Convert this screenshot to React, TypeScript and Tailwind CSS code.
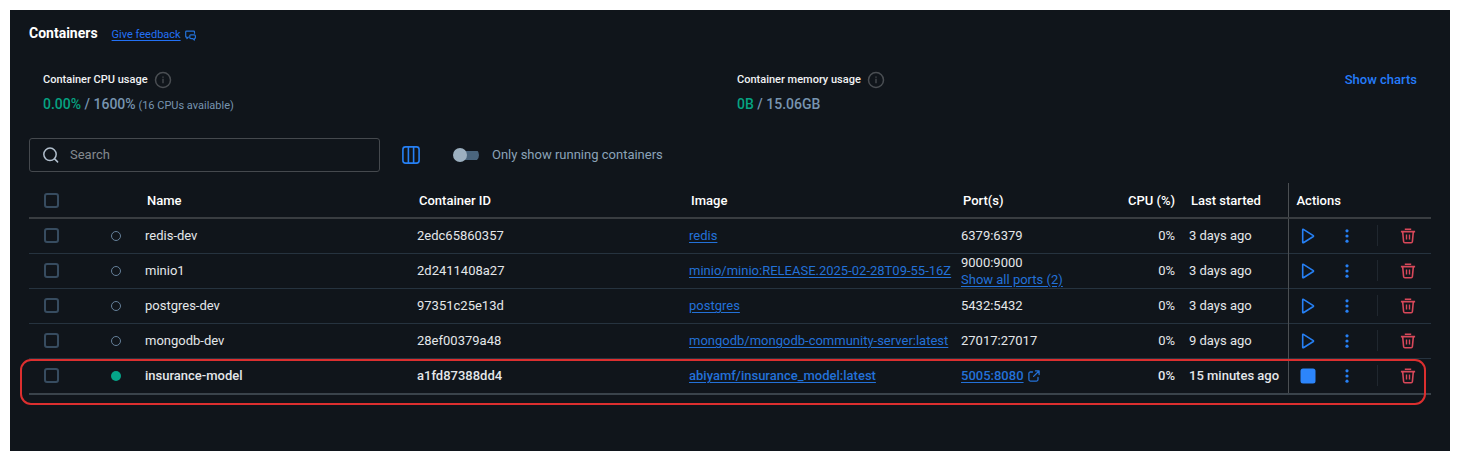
import React from "react";

type Container = {
  name: string;
  id: string;
  image: string;
  port: string;
  morePorts?: string;
  started: string;
  running?: boolean;
};

const containers: Container[] = [
  { name: "redis-dev", id: "2edc65860357", image: "redis", port: "6379:6379", started: "3 days ago" },
  {
    name: "minio1",
    id: "2d2411408a27",
    image: "minio/minio:RELEASE.2025-02-28T09-55-16Z",
    port: "9000:9000",
    morePorts: "Show all ports (2)",
    started: "3 days ago",
  },
  { name: "postgres-dev", id: "97351c25e13d", image: "postgres", port: "5432:5432", started: "3 days ago" },
  {
    name: "mongodb-dev",
    id: "28ef00379a48",
    image: "mongodb/mongodb-community-server:latest",
    port: "27017:27017",
    started: "9 days ago",
  },
  {
    name: "insurance-model",
    id: "a1fd87388dd4",
    image: "abiyamf/insurance_model:latest",
    port: "5005:8080",
    started: "15 minutes ago",
    running: true,
  },
];

function InfoIcon() {
  return (
    <svg width="18" height="18" viewBox="0 0 18 18" fill="none" stroke="#4a4e53" aria-hidden="true">
      <circle cx="9" cy="9" r="7.5" strokeWidth="1.5" />
      <path d="M9 7.8v4.400M9 5.400v1.300" strokeWidth="1.300" />
    </svg>
  );
}

function FeedbackIcon() {
  return (
    <svg width="11" height="11" viewBox="0 0 11 11" fill="none" stroke="#2371d8" strokeWidth="1.2" strokeLinejoin="round" aria-hidden="true">
      <path d="M3.800 7.200H3.400L1.900 8.600V7.200H1.500a.8.8 0 0 1-.8-.8V1.900a.8.8 0 0 1 .8-.8h7.200a.8.8 0 0 1 .8.8v1.900" />
      <path d="M5.700 4.800h3.600a1.100 1.100 0 0 1 1.100 1.100v1.600a1.100 1.100 0 0 1-1 1.100v1.500L7.900 8.700H5.900a1.100 1.100 0 0 1-1.100-1.100V5.700a.9.9 0 0 1 .9-.9z" />
    </svg>
  );
}

function SearchIcon() {
  return (
    <svg width="16" height="16" viewBox="0 0 16 16" fill="none" stroke="#b1bfcd" strokeWidth="1.500" strokeLinecap="round" aria-hidden="true">
      <circle cx="7" cy="7.300" r="6.200" />
      <path d="M11.600 11.900l3 3" />
    </svg>
  );
}

function ColumnsIcon() {
  return (
    <svg width="18" height="18" viewBox="0 0 18 18" fill="none" stroke="#2680f5" strokeWidth="1.600" aria-hidden="true">
      <rect x="0.900" y="0.900" width="16.200" height="16.200" rx="2.600" />
      <path d="M6.400 1v16M11.600 1v16" />
    </svg>
  );
}

function PlayIcon() {
  return (
    <svg width="16" height="16" viewBox="0 0 16 16" fill="none" stroke="#2680f5" strokeWidth="1.600" strokeLinejoin="round" aria-hidden="true">
      <path d="M2.700 1.700v12.600c0 .4.400.6.700.4l9.900-6.200c.3-.2.300-.7 0-.9L3.400 1.300c-.3-.2-.7 0-.7.4z" />
    </svg>
  );
}

function StopIcon() {
  return (
    <svg width="16" height="16" viewBox="0 0 16 16" fill="#2c85fb" aria-hidden="true">
      <rect x="0.500" y="0.500" width="15" height="15" rx="2.500" />
    </svg>
  );
}

function DotsIcon() {
  return (
    <svg width="16" height="16" viewBox="0 0 16 16" fill="#2680f5" aria-hidden="true">
      <circle cx="8" cy="2.800" r="1.600" />
      <circle cx="8" cy="8" r="1.600" />
      <circle cx="8" cy="13.200" r="1.600" />
    </svg>
  );
}

function TrashIcon() {
  return (
    <svg width="16" height="16" viewBox="0 0 16 16" fill="none" stroke="#d9485a" strokeWidth="1.600" strokeLinejoin="round" aria-hidden="true">
      <path d="M.9 3.600h14.200M4.800 1.300h6.400M2.700 4l.9 9.500c.1.800.6 1.300 1.300 1.300h6.200c.7 0 1.200-.5 1.300-1.300L13.300 4" />
      <path d="M6.500 6.600v5M9.500 6.600v5" strokeWidth="1.400" />
    </svg>
  );
}

function ExternalIcon() {
  return (
    <svg width="12" height="12" viewBox="0 0 12 12" fill="none" stroke="#2371d8" strokeWidth="1.300" strokeLinecap="round" strokeLinejoin="round" aria-hidden="true">
      <path d="M4.500 2H2.400C1.500 2 .9 2.600.9 3.500v6.100c0 .9.600 1.500 1.500 1.500h6.100c.9 0 1.500-.6 1.500-1.500V7.500" />
      <path d="M7.500.9h3.600v3.600M11 1L5.600 6.400" />
    </svg>
  );
}

function RowCheckbox({ label }: { label: string }) {
  return (
    <input
      type="checkbox"
      aria-label={label}
      className="block size-[15px] appearance-none rounded-[3px] border-2 border-[#374c60] checked:bg-[#2680f5]"
    />
  );
}

function Usage({ title, used, total, note }: { title: string; used: string; total: string; note?: string }) {
  return (
    <section>
      <h2 className="flex items-center gap-1.5 text-[11px] leading-5 font-medium text-[#f0f2f4]">
        {title}
        <InfoIcon />
      </h2>
      <p className="mt-1 text-[14px] leading-5 font-medium text-[#7794b0]">
        <span className="text-[#05a382]">{used}</span> / {total}
        {note && <span className="text-[11px] font-normal"> {note}</span>}
      </p>
    </section>
  );
}

const link = "text-[#2371d8] underline underline-offset-2";

function Row({ c }: { c: Container }) {
  const line = c.running ? "h-9 border-b-2 border-[#3a434b] font-medium" : "h-[35px] border-b border-[#26333f]";
  return (
    <tr className={line}>
      <td className="pl-[15px]">
        <RowCheckbox label={`Select ${c.name}`} />
      </td>
      <td className="pl-[22px]">
        <span
          className={
            c.running
              ? "block size-[10px] rounded-full bg-[#05a68a]"
              : "block size-[10px] rounded-full border border-[#65809a]"
          }
        />
      </td>
      <td className="px-2">{c.name}</td>
      <td className="px-2">{c.id}</td>
      <td className="px-2 whitespace-nowrap">
        <a href="#image" className={link}>{c.image}</a>
      </td>
      <td className="px-2">
        {c.running ? (
          <a href="#port" className="flex items-center gap-1">
            <span className={link}>{c.port}</span>
            <ExternalIcon />
          </a>
        ) : (
          c.port
        )}
        {c.morePorts && (
          <>
            <br />
            <a href="#ports" className={link}>{c.morePorts}</a>
          </>
        )}
      </td>
      <td className="px-2 text-right">0%</td>
      <td className="pl-1.5 whitespace-nowrap">{c.started}</td>
      <td className="border-l border-[#4b4f53]">
        <div className="flex items-center pr-[15px] pl-[11px]">
          <button type="button" aria-label={c.running ? "Stop" : "Start"}>
            {c.running ? <StopIcon /> : <PlayIcon />}
          </button>
          <button type="button" aria-label="More actions" className="ml-[23px]">
            <DotsIcon />
          </button>
          <span className="ml-auto h-[21px] w-px bg-[#20272f]" />
          <button type="button" aria-label="Delete" className="ml-[22px]">
            <TrashIcon />
          </button>
        </div>
      </td>
    </tr>
  );
}

export default function App() {
  return (
    <div className="flex min-h-screen bg-white p-2.5 font-['Roboto',sans-serif]">
      <main className="min-w-0 flex-1 bg-[#10151b] px-[19px] pt-[13px] text-[13px] text-[#e4e7ea]">
        <header className="flex items-center gap-3.5">
          <h1 className="text-[14px] leading-5 font-bold text-white">Containers</h1>
          <a href="#feedback" className="flex items-center gap-1 pt-1 text-[11px] leading-4 text-[#2371f5]">
            <span className="underline underline-offset-2">Give feedback</span>
            <FeedbackIcon />
          </a>
        </header>

        <div className="mt-[27px] grid grid-cols-2 px-3.5">
          <Usage title="Container CPU usage" used="0.00%" total="1600%" note="(16 CPUs available)" />
          <div className="flex items-start justify-between pl-[7px]">
            <Usage title="Container memory usage" used="0B" total="15.06GB" />
            <button type="button" className="leading-5 font-medium text-[#257cfa]">
              Show charts
            </button>
          </div>
        </div>

        <div className="mt-[22px] flex items-center">
          <label className="flex h-[34px] w-[351px] items-center gap-[11px] rounded-[3px] border border-[#45494e] px-[13px]">
            <SearchIcon />
            <input
              type="text"
              aria-label="Search"
              placeholder="Search"
              className="min-w-0 flex-1 bg-transparent outline-none placeholder:text-[#84898e]"
            />
          </label>
          <button type="button" aria-label="Choose columns" className="ml-[22px]">
            <ColumnsIcon />
          </button>
          <label className="ml-[33px] flex items-center gap-[13px] text-[#8ba3b8]">
            <input
              type="checkbox"
              role="switch"
              className="flex h-[14px] w-[26px] appearance-none items-center rounded-[7px] bg-[linear-gradient(#4a657d,#4a657d)] bg-[length:20px_9px] bg-right bg-no-repeat before:size-[14px] before:rounded-full before:bg-[#9cb0c0] checked:justify-end"
            />
            Only show running containers
          </label>
        </div>

        <div className="relative mt-[11px]">
          <table className="w-full table-fixed border-collapse text-left leading-[17px]">
            <colgroup>
              <col className="w-[60px]" />
              <col className="w-12" />
              <col />
              <col />
              <col />
              <col className="w-[165px]" />
              <col className="w-[65px]" />
              <col className="w-[105px]" />
              <col className="w-[143px]" />
            </colgroup>
            <thead>
              <tr className="h-[35px] border-b-2 border-[#393d41] text-white">
                <th className="pl-[15px]">
                  <RowCheckbox label="Select all containers" />
                </th>
                <th />
                <th className="px-2.5 font-medium">Name</th>
                <th className="px-2.5 font-medium">Container ID</th>
                <th className="px-2.5 font-medium">Image</th>
                <th className="px-2.5 font-medium">Port(s)</th>
                <th className="px-2.5 text-right font-medium whitespace-nowrap">CPU (%)</th>
                <th className="px-2 font-medium whitespace-nowrap">Last started</th>
                <th className="border-l border-[#4b4f53] px-2 font-medium">Actions</th>
              </tr>
            </thead>
            <tbody>
              {containers.map((c) => (
                <Row key={c.id} c={c} />
              ))}
            </tbody>
          </table>
          <div className="pointer-events-none absolute right-[5px] -bottom-2.5 -left-[9px] h-[46px] rounded-[11px] border-2 border-[#dc2f2f]" />
        </div>
      </main>
    </div>
  );
}
